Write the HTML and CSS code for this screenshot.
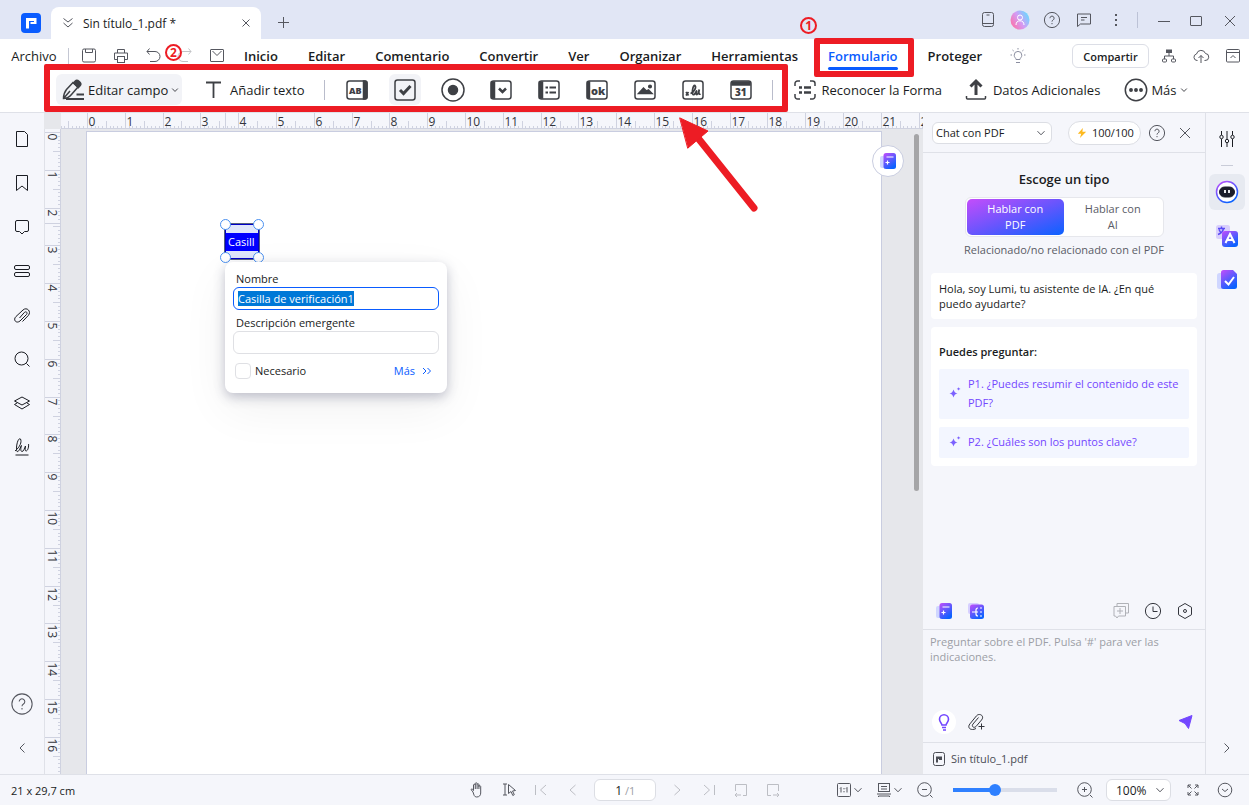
FILE: index.html
```html
<!DOCTYPE html>
<html lang="es">
<head>
    <meta charset="UTF-8">
    <meta name="viewport" content="width=device-width, initial-scale=1.0">
    <title>Sin título_1.pdf</title>
    <link rel="stylesheet" href="styles.css">
</head>
<body>
    <svg class="defs" width="0" height="0" aria-hidden="true">
        <defs>
            <linearGradient id="grad-ai" x1="0" y1="0" x2="0.6" y2="1">
                <stop offset="0" stop-color="#c44dfb"/>
                <stop offset="1" stop-color="#0b62ff"/>
            </linearGradient>
            <linearGradient id="grad-avatar" x1="0" y1="0.8" x2="1" y2="0.2">
                <stop offset="0" stop-color="#ff6fa5"/>
                <stop offset="0.5" stop-color="#d39cf5"/>
                <stop offset="1" stop-color="#5fe0ff"/>
            </linearGradient>
        </defs>
        <symbol id="i-help" viewBox="0 0 18 18"><circle cx="9" cy="9" r="7.6"/><path d="M6.9 7.2a2.1 2.1 0 1 1 3.2 1.8c-.8.5-1.1.8-1.1 1.6M9 12v1.2"/></symbol>
        <symbol id="i-close" viewBox="0 0 18 18"><path d="M4 4l10 10M14 4L4 14"/></symbol>
        <symbol id="i-chevron" viewBox="0 0 10 10"><path d="M1.5 3.2L5 6.8l3.5-3.6"/></symbol>
        <symbol id="i-spark" viewBox="0 0 14 14"><path d="M5.500 3.500c.8 2.500 1.500 3.200 4 4-2.500.8-3.200 1.500-4 4-.8-2.500-1.500-3.200-4-4 2.500-.8 3.200-1.500 4-4zM10.600 1c.3 1.200.6 1.500 1.900 1.900-1.300.3-1.600.6-1.900 1.900-.3-1.300-.6-1.600-1.900-1.900 1.300-.4 1.600-.7 1.900-1.900z"/></symbol>
        <symbol id="i-notes" viewBox="0 0 18 18"><g stroke="none"><rect x="1" y="4" width="8" height="12" rx="2" fill="#cfd6ff"/><rect x="4.500" y="1" width="12.500" height="16" rx="2.500" fill="url(#grad-ai)"/></g><path d="M7.500 5h7M8.500 8.500v4M6.500 10.500h4" stroke="#fff" stroke-width="1.200" fill="none"/></symbol>
    </svg>

    <header class="titlebar">
        <svg class="logo" viewBox="0 0 20 20"><rect width="20" height="20" rx="4" fill="#0a5cff"/><path d="M5 5h10.500v6H9.500V9h3.500V8H8v7.500H5z" fill="#fff"/></svg>
        <div class="doc-tab">
            <svg class="icon" viewBox="0 0 18 18"><path d="M4.500 4.500L9 8l4.500-3.500M4.500 9L9 13l4.500-4"/></svg>
            <span class="doc-name">Sin título_1.pdf *</span>
            <button class="tab-close" aria-label="Cerrar pestaña"><svg viewBox="0 0 10 10"><path d="M1.500 1.500l7 7M8.500 1.500l-7 7"/></svg></button>
        </div>
        <button class="icon-btn new-tab" aria-label="Nueva pestaña"><svg class="icon" viewBox="0 0 18 18"><path d="M9.500 3v11M4 8.500h11"/></svg></button>
        <div class="title-actions">
            <button class="icon-btn" aria-label="Dispositivo"><svg class="icon" viewBox="0 0 18 18"><rect x="3.500" y="1.500" width="11" height="14" rx="2"/><path d="M3.500 12.500h11M7.500 4h3"/></svg></button>
            <button class="icon-btn" aria-label="Cuenta"><svg class="avatar" viewBox="0 0 20 20"><circle cx="10" cy="10" r="9.500" fill="url(#grad-avatar)"/><circle cx="10" cy="7.500" r="2.500"/><path d="M6 15c0-2.700 1.500-4.200 4-4.200s4 1.500 4 4.200"/></svg></button>
            <button class="icon-btn" aria-label="Ayuda"><svg class="icon"><use href="#i-help"/></svg></button>
            <button class="icon-btn" aria-label="Comentarios"><svg class="icon" viewBox="0 0 18 18"><path d="M2.500 3h13v10h-10l-3 2.500zM6 6.500h6M6 9h3.500"/></svg></button>
            <button class="icon-btn" aria-label="Más opciones"><svg class="icon" viewBox="0 0 18 18"><path d="M9 3v2M9 8v2M9 13v2" stroke-width="2"/></svg></button>
            <span class="title-sep"></span>
            <button class="icon-btn" aria-label="Minimizar"><svg class="icon" viewBox="0 0 18 18"><path d="M3 10.500h12"/></svg></button>
            <button class="icon-btn" aria-label="Maximizar"><svg class="icon" viewBox="0 0 18 18"><rect x="3.500" y="5.500" width="11" height="9" rx=".5"/></svg></button>
            <button class="icon-btn win-close" aria-label="Cerrar"><svg class="icon" viewBox="0 0 18 18"><path d="M4 5l10 10M14 5L4 15"/></svg></button>
        </div>
    </header>

    <div class="menubar">
        <button class="menu-file">Archivo</button>
        <span class="menu-sep"></span>
        <button class="icon-btn" aria-label="Guardar"><svg class="icon" viewBox="0 0 18 18"><rect x="2.500" y="2" width="13" height="13" rx="1.500"/><path d="M5.500 2v3.500h7V2"/></svg></button>
        <button class="icon-btn" aria-label="Imprimir"><svg class="icon" viewBox="0 0 18 18"><path d="M5.500 6V2.500h7V6M5 12.500H2.500V6h13v6.500H13"/><rect x="5.500" y="9.500" width="7" height="6"/></svg></button>
        <span class="undo">
            <button class="icon-btn" aria-label="Deshacer"><svg class="icon" viewBox="0 0 18 18"><path d="M5.500 1.500L3 4.500l2.500 3M3 4.500h8a5 5 0 0 1 0 10H6"/></svg></button>
            <span class="step step-two">2</span>
        </span>
        <button class="icon-btn faded" aria-label="Rehacer"><svg class="icon" viewBox="0 0 18 18"><path d="M12.500 1.500L15 4.500l-2.500 3M15 4.500H7a5 5 0 0 0 0 10h5"/></svg></button>
        <button class="icon-btn" aria-label="Enviar por correo"><svg class="icon" viewBox="0 0 18 18"><rect x="2.500" y="2.500" width="13" height="12" rx=".5"/><path d="M4.500 4l4.500 4.500L13.500 4"/></svg></button>
        <nav class="menu-tabs">
            <a href="#">Inicio</a>
            <a href="#">Editar</a>
            <a href="#">Comentario</a>
            <a href="#">Convertir</a>
            <a href="#">Ver</a>
            <a href="#">Organizar</a>
            <a href="#">Herramientas</a>
            <a href="#" class="current">Formulario<span class="step step-one">1</span></a>
            <a href="#">Proteger</a>
        </nav>
        <div class="menu-actions">
            <button class="icon-btn soft" aria-label="Sugerencias"><svg class="icon" viewBox="0 0 18 18"><path d="M7 12.500c0-1.500-1.800-2-1.800-4.300a3.800 3.800 0 0 1 7.600 0c0 2.300-1.800 2.800-1.800 4.300zM7 15.500h4M9 1v1.500M1.500 8H3M15 8h1.500M3.500 3l1.200 1M14.500 3l-1.200 1"/></svg></button>
            <button class="share">Compartir</button>
            <button class="icon-btn" aria-label="Organigrama"><svg class="icon" viewBox="0 0 18 18"><rect x="6.500" y="3" width="5" height="2.500" fill="currentColor"/><path d="M9 5.500V9M4.500 12V9h9v3"/><rect x="2.500" y="12" width="4" height="3" rx="1"/><rect x="11.500" y="12" width="4" height="3" rx="1"/></svg></button>
            <button class="icon-btn" aria-label="Subir a la nube"><svg class="icon" viewBox="0 0 18 18"><path d="M5.500 13.500H5a3.300 3.300 0 0 1-.5-6.500 4.700 4.700 0 0 1 9-.5A3.500 3.500 0 0 1 13 13.500h-.5M9 16V8.500M6.500 11L9 8.500l2.500 2.500"/></svg></button>
            <button class="icon-btn" aria-label="Contraer cinta"><svg class="icon" viewBox="0 0 18 18"><rect x="2.500" y="2.500" width="13" height="12.500" rx="1"/><path d="M2.500 5.500h13M6.500 11L9 8.500l2.500 2.500"/></svg></button>
        </div>
    </div>

    <div class="toolbar">
        <div class="form-tools">
            <button class="tool edit-field">
                <svg class="tool-icon" viewBox="0 0 24 24"><path d="M2.500 20.500c0-4 1-6.500 3-9L12 4.500l5 4.500-6.500 7.500c-2 2.500-4.500 3.800-8 4zM2.500 20.500L9 13"/><path d="M12.500 5l1.800-2c2-2 7 2 5 4.500l-2 2.200z" fill="currentColor"/><path d="M5 21h18M15.500 16.500H23" stroke-width="2"/></svg>
                <span>Editar campo</span>
                <svg class="chevron"><use href="#i-chevron"/></svg>
            </button>
            <button class="tool add-text">
                <svg class="tool-icon" viewBox="0 0 24 24"><path d="M5 4.500h15M12.500 4.500v15.500" stroke-width="1.800"/></svg>
                <span>Añadir texto</span>
            </button>
            <span class="tool-sep"></span>
            <div class="field-tools">
                <button aria-label="Campo de texto"><svg class="tool-icon" viewBox="0 0 24 24"><rect x="2" y="3" width="20" height="18" rx="2.500"/><path d="M18.500 3H20a2 2 0 0 1 2 2v14a2 2 0 0 1-2 2h-1.500z" fill="currentColor"/><text x="4" y="15.500">AB</text></svg></button>
                <button class="active" aria-label="Casilla de verificación"><svg class="tool-icon" viewBox="0 0 24 24"><rect x="2" y="2" width="20" height="20" rx="2.500"/><path d="M7 12l3.500 3.500L17.500 8" stroke-width="3"/></svg></button>
                <button aria-label="Botón de opción"><svg class="tool-icon" viewBox="0 0 24 24"><circle cx="12" cy="12" r="11"/><circle cx="12" cy="12" r="4.500" fill="currentColor"/></svg></button>
                <button aria-label="Lista desplegable"><svg class="tool-icon" viewBox="0 0 24 24"><rect x="2" y="3" width="20" height="18" rx="2.500"/><path d="M2.500 4h3v16h-3z" fill="currentColor"/><path d="M10 10.500l3.500 3.500 3.500-3.500" stroke-width="2.500"/></svg></button>
                <button aria-label="Cuadro de lista"><svg class="tool-icon" viewBox="0 0 24 24"><rect x="2" y="3" width="20" height="18" rx="2.500"/><path d="M2.500 4h3v16h-3z" fill="currentColor"/><path d="M8.500 9.500h2.500M12.500 9.500H19M8.500 14.500h2.500M12.500 14.500H19" stroke-width="2"/></svg></button>
                <button aria-label="Botón"><svg class="tool-icon" viewBox="0 0 24 24"><rect x="2" y="3" width="20" height="18" rx="2.500"/><path d="M2.500 4h2v16h-2z" fill="currentColor"/><text class="ok" x="6" y="16.500">ok</text></svg></button>
                <button aria-label="Campo de imagen"><svg class="tool-icon" viewBox="0 0 24 24"><rect x="2" y="3" width="20" height="18" rx="2.500"/><path d="M5.500 15.500l5-5.500 3 3 2-1 3.500 3.500z" fill="currentColor"/><circle cx="17" cy="8.500" r="1.300" fill="currentColor"/></svg></button>
                <button aria-label="Firma digital"><svg class="tool-icon" viewBox="0 0 24 24"><rect x="2" y="3" width="20" height="18" rx="2.500"/><path d="M5 14l2.500 3.500M7.500 14L5 17.500M9.500 15.500c4-1 6-6.500 4.500-8-2-1-3.500 7.500-2 9 1.500 1 2.800-3 3.800-4-1 2.500-1 4.500.3 4 1-.5 1.500-3 2.200-5-.8 3-.6 5.500 1.200 4.500" stroke-width="1.700"/></svg></button>
                <button aria-label="Campo de fecha"><svg class="tool-icon" viewBox="0 0 24 24"><rect x="2" y="3" width="20" height="18" rx="2.500"/><path d="M3 4h18v3H3z" fill="currentColor"/><text x="6" y="18" class="num">31</text></svg></button>
            </div>
            <span class="tool-sep last"></span>
            <svg class="arrow" viewBox="0 0 80 96"><path d="M15 16l60 75" stroke-width="7"/><path d="M1 1l28 13L9 31z" class="arrow-head"/></svg>
        </div>
        <button class="tool">
            <svg class="tool-icon" viewBox="0 0 24 24"><path d="M7 3H4.500A2.500 2.500 0 0 0 2 5.500V8M17 3h2.500A2.500 2.500 0 0 1 22 5.500V8M7 21H4.500A2.500 2.500 0 0 1 2 18.500V16M17 21h2.500a2.500 2.500 0 0 0 2.500-2.500V16"/><path d="M6 9.500h3M11 9.500h7M6 14.500h3M11 14.500h7" stroke-width="2.500"/></svg>
            <span>Reconocer la Forma</span>
        </button>
        <button class="tool extra-data">
            <svg class="tool-icon" viewBox="0 0 24 24"><path d="M2.500 18v2a1 1 0 0 0 1 1h17a1 1 0 0 0 1-1v-2"/><path d="M12 17V4M6.500 8.500L12 3l5.500 5.500" stroke-width="3"/></svg>
            <span>Datos Adicionales</span>
        </button>
        <button class="tool more">
            <svg class="tool-icon" viewBox="0 0 24 24"><circle cx="12" cy="12" r="10.700"/><g fill="currentColor"><circle cx="7" cy="12" r="1.200"/><circle cx="12" cy="12" r="1.200"/><circle cx="17" cy="12" r="1.200"/></g></svg>
            <span>Más</span>
            <svg class="chevron"><use href="#i-chevron"/></svg>
        </button>
    </div>

    <main class="workspace">
        <aside class="rail left-rail">
            <button aria-label="Miniaturas"><svg class="icon" viewBox="0 0 18 18"><path d="M3.500 1.500h8l3 3v12h-11z"/></svg></button>
            <button aria-label="Marcadores"><svg class="icon" viewBox="0 0 18 18"><path d="M3.500 1.500h11v15L9 12l-5.500 4.500z"/></svg></button>
            <button aria-label="Comentarios"><svg class="icon" viewBox="0 0 18 18"><path d="M4 2.500h10a1.500 1.500 0 0 1 1.500 1.500v8a1.500 1.500 0 0 1-1.500 1.500h-2.500L9 16l-2.500-2.500H4A1.500 1.500 0 0 1 2.500 12V4A1.500 1.500 0 0 1 4 2.500z"/></svg></button>
            <button aria-label="Campos"><svg class="icon" viewBox="0 0 18 18"><rect x="1.500" y="3.500" width="15" height="4" rx="1.500"/><rect x="1.500" y="10.500" width="15" height="4" rx="1.500"/></svg></button>
            <button aria-label="Adjuntos"><svg class="icon" viewBox="0 0 18 18"><path d="M9.500 15.500L15.300 9.500c3.500-4-1.500-9-5.300-5.500L3 10.500c-3.500 3.500.5 7.500 4 4.500l6.500-6.500c1.500-2-.5-3.500-2-2.200L6.500 12"/></svg></button>
            <button aria-label="Buscar"><svg class="icon" viewBox="0 0 18 18"><circle cx="8.500" cy="8.500" r="6.500"/><path d="M13.500 13.500l3 3"/></svg></button>
            <button aria-label="Capas"><svg class="icon" viewBox="0 0 18 18"><path d="M9 3l7.500 4L9 11 1.500 7zM4 9l-2.500 1.500 7.500 4.500 7.500-4.500L14 9"/></svg></button>
            <button aria-label="Firmas"><svg class="icon" viewBox="0 0 18 18"><path d="M2 13C7 9 9 4 7.500 1 4.500-1 2.500 11 4 13.500c2 1 3.500-5 4.500-6-1 3-1 6 .5 6 2 0 2.500-4 3.500-5.500-.5 3-.5 5 .5 5 2 0 3-5 2.500-7M2.500 17h13"/></svg></button>
            <button class="push" aria-label="Ayuda"><svg class="big-help"><use href="#i-help"/></svg></button>
            <button class="collapse" aria-label="Contraer"><svg class="icon" viewBox="0 0 18 18"><path d="M11.500 4.500L7 9l4.500 4.500"/></svg></button>
        </aside>

        <section class="document">
            <div class="ruler-corner"></div>
            <svg class="ruler ruler-x" id="ruler-x"></svg>
            <svg class="ruler ruler-y" id="ruler-y"></svg>
            <div class="canvas">
                <div class="page">
                    <div class="field">
                        <span class="field-name">Casill</span>
                        <i class="handle nw"></i><i class="handle ne"></i><i class="handle sw"></i><i class="handle se"></i>
                    </div>
                    <form class="field-popup">
                        <label for="field-name">Nombre</label>
                        <input type="text" id="field-name" value="Casilla de verificación1">
                        <label for="field-hint">Descripción emergente</label>
                        <input type="text" id="field-hint">
                        <div class="popup-foot">
                            <input type="checkbox" id="required">
                            <label for="required">Necesario</label>
                            <a href="#">Más <svg viewBox="0 0 10 10"><path d="M1 2l3 3-3 3M5.500 2l3 3-3 3"/></svg></a>
                        </div>
                    </form>
                    <button class="float-btn" aria-label="Asistente"><svg class="icon"><use href="#i-notes"/></svg></button>
                </div>
                <span class="scroll-thumb"></span>
            </div>
        </section>

        <section class="chat">
            <div class="chat-head">
                <div class="select-box mode-select">
                    <select aria-label="Modo de chat"><option>Chat con PDF</option></select>
                    <svg class="chevron"><use href="#i-chevron"/></svg>
                </div>
                <span class="credits"><svg viewBox="0 0 12 12"><path d="M7 0L1 7h4l-1.500 5L11 4.500H6.500z"/></svg>100/100</span>
                <button class="icon-btn" aria-label="Ayuda"><svg class="icon"><use href="#i-help"/></svg></button>
                <button class="icon-btn head-close" aria-label="Cerrar chat"><svg class="icon"><use href="#i-close"/></svg></button>
            </div>
            <div class="chat-body">
                <h2>Escoge un tipo</h2>
                <div class="switch">
                    <button class="on">Hablar con PDF</button>
                    <button>Hablar con AI</button>
                </div>
                <p class="related">Relacionado/no relacionado con el PDF</p>
                <div class="card">Hola, soy Lumi, tu asistente de IA. ¿En qué puedo ayudarte?</div>
                <div class="card ask">
                    <h3>Puedes preguntar:</h3>
                    <button class="question"><svg><use href="#i-spark"/></svg><span>P1. ¿Puedes resumir el contenido de este PDF?</span></button>
                    <button class="question"><svg><use href="#i-spark"/></svg><span>P2. ¿Cuáles son los puntos clave?</span></button>
                </div>
            </div>
            <div class="chat-tools">
                <button class="icon-btn" aria-label="Resumir"><svg class="icon"><use href="#i-notes"/></svg></button>
                <button class="icon-btn" aria-label="Mapa mental"><svg class="icon" viewBox="0 0 18 18"><rect x="1" y="1" width="11" height="11" rx="2" fill="#d6cfff" stroke="none"/><rect x="3" y="2.500" width="14" height="14.500" rx="2.500" fill="url(#grad-ai)" stroke="none"/><path d="M5 10h4M11 6c-2 0-2 1-2 2v4c0 1 0 2 2 2M9 10h2M13 6h2M13 10h2M13 14h2" stroke="#fff" stroke-width="1.200"/></svg></button>
                <button class="icon-btn faded new-chat" aria-label="Nuevo chat"><svg class="icon" viewBox="0 0 18 18"><path d="M5 4V1.500h11.500V11H14M2 4.500h11.500v9.500H6.500l-1.500 2-1.500-2H2zM5 9h6M8 6v6"/></svg></button>
                <button class="icon-btn" aria-label="Historial"><svg class="icon" viewBox="0 0 18 18"><circle cx="9" cy="9" r="7.600"/><path d="M9 4.500V9.500h4.500"/></svg></button>
                <button class="icon-btn" aria-label="Ajustes"><svg class="icon" viewBox="0 0 18 18"><path d="M9 1.500l6.500 3.800v7.400L9 16.500l-6.500-3.800V5.300z"/><circle cx="9" cy="9" r="1.500"/></svg></button>
            </div>
            <div class="composer">
                <textarea aria-label="Mensaje" placeholder="Preguntar sobre el PDF. Pulsa '#' para ver las indicaciones."></textarea>
                <div class="composer-bar">
                    <button class="idea" aria-label="Ideas"><svg class="icon" viewBox="0 0 18 18"><path d="M7 12c0-1.800-2.500-2.700-2.500-5.800a4.500 4.500 0 0 1 9 0c0 3.100-2.500 4-2.500 5.800zM7 14.500h4M8 17h3" stroke-width="1.600"/></svg></button>
                    <button class="icon-btn" aria-label="Adjuntar"><svg class="icon" viewBox="0 0 18 18"><path d="M9 15.500l-2 .8c-4 1-7-2-4-5.500l6.500-8C12.500-.5 18 3 14.500 7L9 13.500c-2 2-5 0-3-2.500l5.500-6.500M14.500 10.500v6M11.500 13.500h6"/></svg></button>
                    <button class="icon-btn send" aria-label="Enviar"><svg class="icon" viewBox="0 0 18 18"><path d="M16 2.500L12.500 15.500 9 10.500 3 7.500z"/></svg></button>
                </div>
            </div>
            <div class="chat-file"><svg class="icon" viewBox="0 0 18 18"><rect x="3.500" y="2.500" width="11" height="13" rx="2"/><path d="M6 6.500h6v3.500H9V9h1.500-2.500v3.500H6z" fill="currentColor" stroke="none"/></svg>Sin título_1.pdf</div>
        </section>

        <aside class="rail right-rail">
            <button aria-label="Propiedades"><svg class="icon" viewBox="0 0 18 18"><path d="M3.500 1v4M3.500 9v8M9 1v8M9 13v4M14.500 1v4M14.500 9v8"/><circle cx="3.500" cy="7" r="1.700"/><circle cx="9" cy="11" r="1.700"/><circle cx="14.500" cy="7" r="1.700"/></svg></button>
            <span class="rail-dash"></span>
            <button class="active" aria-label="Lumi"><svg class="rail-ai" viewBox="0 0 24 24"><circle cx="12" cy="12" r="10.500" fill="#fff" stroke="url(#grad-ai)" stroke-width="1.500"/><rect x="4.500" y="7" width="15" height="10" rx="5" fill="#1b1d2a" stroke="#1b1d2a"/><path d="M10 10v3M14 10v3" stroke="#fff" stroke-width="1.800"/></svg></button>
            <button aria-label="Traducir"><svg class="rail-ai" viewBox="0 0 24 24"><rect x="1" y="1" width="14" height="14" rx="2.500" fill="#d9cffc"/><path d="M3 4.500h7M6.500 2.500v2M8.500 4.500C8 7 6 9.500 3 10.500M4 5.500c.8 1.800 1.500 2.800 2.500 3.500" stroke="#5a4bf5" stroke-width="1.500" fill="none"/><rect x="7" y="7" width="16" height="16" rx="3" fill="url(#grad-ai)"/><path d="M10.500 19l4.500-9 4.500 9M12.500 16h5" stroke="#fff" stroke-width="2" fill="none"/></svg></button>
            <button aria-label="Corregir"><svg class="rail-ai" viewBox="0 0 24 24"><rect x="2" y="5" width="12" height="16" rx="2.500" fill="#cfd6ff"/><path d="M9 2h9l4 4v12.500a2.500 2.500 0 0 1-2.500 2.500h-11A2.500 2.500 0 0 1 6 18.500v-14A2.500 2.500 0 0 1 8.500 2z" fill="url(#grad-ai)"/><path d="M10 13l3.500 3.500L19 9" stroke="#fff" stroke-width="2" fill="none"/></svg></button>
            <button class="push collapse" aria-label="Expandir"><svg class="icon" viewBox="0 0 18 18"><path d="M6.500 4.500L11 9l-4.500 4.500"/></svg></button>
        </aside>
    </main>

    <footer class="statusbar">
        <span>21 x 29,7 cm</span>
        <div class="page-nav">
            <button class="icon-btn" aria-label="Mano"><svg class="icon" viewBox="0 0 18 18"><path d="M5 11L3 8.500c1-1 2 0 2.500 1V4c0-1 1.800-1 1.800 0V2.500c0-1 1.800-1 1.800 0V3.500c0-1 1.800-1 1.800 0v2c0-1 1.800-1 1.800 0V12c0 2.500-1.500 4-4 4S6 14 5 11zM7.300 4v4M9.100 3.500V8M10.900 4v4"/></svg></button>
            <button class="icon-btn" aria-label="Seleccionar"><svg class="icon" viewBox="0 0 18 18"><path d="M3 3h4M5 3v11M3 14h4M8.500 3.500v9l2.500-2 1.800 4 1.500-.8L12.500 10l3-.5z"/></svg></button>
            <button class="icon-btn faded" aria-label="Primera"><svg class="icon" viewBox="0 0 18 18"><path d="M3.500 4v10M14 4L8.500 9l5.500 5"/></svg></button>
            <button class="icon-btn faded" aria-label="Anterior"><svg class="icon" viewBox="0 0 18 18"><path d="M11.500 4L6 9l5.500 5"/></svg></button>
            <label class="page-box"><input type="text" value="1" aria-label="Página"><span>/1</span></label>
            <button class="icon-btn faded" aria-label="Siguiente"><svg class="icon" viewBox="0 0 18 18"><path d="M6.500 4L12 9l-5.500 5"/></svg></button>
            <button class="icon-btn faded" aria-label="Última"><svg class="icon" viewBox="0 0 18 18"><path d="M4 4l5.500 5L4 14M14.500 4v10"/></svg></button>
            <button class="icon-btn faded" aria-label="Vista anterior"><svg class="icon" viewBox="0 0 18 18"><path d="M3.500 10V3.500h11v11H11M9 14H3M5 12l-2 2 2 2"/></svg></button>
            <button class="icon-btn faded" aria-label="Vista siguiente"><svg class="icon" viewBox="0 0 18 18"><path d="M7 14.500H3.500v-11h11V10M9 14h6M13 12l2 2-2 2"/></svg></button>
        </div>
        <div class="view-tools">
            <button class="view-btn" aria-label="Ajuste"><svg class="icon" viewBox="0 0 18 18"><rect x="2.500" y="2.500" width="13" height="13" rx="1"/><path d="M5 7.500l1-1v5M11 7.500l1-1v5M9 7v1.300M9 10v1.300"/></svg><svg class="chevron"><use href="#i-chevron"/></svg></button>
            <button class="view-btn" aria-label="Vista de página"><svg class="icon" viewBox="0 0 18 18"><rect x="3.500" y="2.500" width="11" height="8"/><path d="M6 5.500h6M6 8h6M2 13h14M3.500 16v-1h11v1"/></svg><svg class="chevron"><use href="#i-chevron"/></svg></button>
            <button class="icon-btn" aria-label="Alejar"><svg class="icon" viewBox="0 0 18 18"><circle cx="8.500" cy="8.500" r="6.800"/><path d="M14 14l2.500 2.500M6 8.500h5"/></svg></button>
            <input type="range" class="zoom-range" min="0" max="100" value="39" aria-label="Zoom">
            <button class="icon-btn" aria-label="Acercar"><svg class="icon" viewBox="0 0 18 18"><circle cx="8.500" cy="8.500" r="6.800"/><path d="M14 14l2.500 2.500M6 8.500h5M8.500 6v5"/></svg></button>
            <div class="select-box zoom-select">
                <select aria-label="Nivel de zoom"><option>100%</option></select>
                <svg class="chevron"><use href="#i-chevron"/></svg>
            </div>
            <button class="icon-btn" aria-label="Pantalla completa"><svg class="icon" viewBox="0 0 18 18"><path d="M4 7V4h3M11 4h3v3M14 11v3h-3M7 14H4v-3M4 4l3.500 3.500M14 4l-3.500 3.500M14 14l-3.500-3.500M4 14l3.500-3.500"/></svg></button>
            <button class="icon-btn" aria-label="Ocultar barra"><svg class="icon" viewBox="0 0 18 18"><circle cx="9" cy="9" r="6.800"/><path d="M6 8l3 2.500L12 8"/></svg></button>
        </div>
    </footer>

    <script src="script.js"></script>
</body>
</html>
```

FILE: styles.css
```css
* {
    box-sizing: border-box;
}

body {
    margin: 0;
    height: 100vh;
    display: flex;
    flex-direction: column;
    overflow: hidden;
    font-family: "Open Sans", "Noto Sans", sans-serif;
    font-size: 13px;
    color: #1a1c22;
    background-color: #fff;
}

button,
input,
select,
textarea {
    font: inherit;
    color: inherit;
}

button {
    border: none;
    padding: 0;
    background: none;
    cursor: pointer;
}

a {
    color: inherit;
    text-decoration: none;
}

.defs {
    position: absolute;
}

.icon {
    display: block;
    width: 18px;
    height: 18px;
    fill: none;
    stroke: currentColor;
    stroke-width: 1;
}

.icon-btn {
    width: 32px;
    height: 28px;
    flex: none;
    display: flex;
    align-items: center;
    justify-content: center;
    color: #55575f;
}

.faded {
    opacity: 0.35;
}

.chevron {
    width: 10px;
    height: 10px;
    flex: none;
    fill: none;
    stroke: #55575f;
    stroke-width: 1;
}

/* Title bar */
.titlebar {
    height: 39px;
    flex: none;
    display: flex;
    align-items: center;
    padding: 7px 3px 0 21px;
    background-color: #e1e6f5;
}

.logo {
    width: 20px;
    height: 20px;
    margin-right: 10px;
}

.doc-tab {
    width: 210px;
    height: 32px;
    display: flex;
    align-items: center;
    padding: 0 10px 0 8px;
    background-color: #fff;
    border-radius: 8px 8px 0 0;
    font-size: 12px;
}

.doc-tab .icon {
    color: #55575f;
}

.doc-name {
    flex: 1;
    margin-left: 6px;
}

.tab-close {
    width: 10px;
    height: 10px;
    display: flex;
}

.tab-close svg {
    width: 10px;
    stroke: #55575f;
}

.new-tab {
    margin-left: 6px;
}

.title-actions {
    display: flex;
    align-items: center;
    margin: 0 0 7px auto;
}

.avatar {
    width: 20px;
    height: 20px;
    fill: none;
    stroke: #fff;
}

.avatar circle:first-child {
    stroke: none;
}

.title-sep {
    width: 1px;
    height: 16px;
    margin: 0 10px 0 5px;
    background-color: #bcc2d6;
}

.win-close {
    margin-left: 2px;
}

/* Menu bar */
.menubar {
    height: 34px;
    flex: none;
    display: flex;
    align-items: center;
    padding-left: 11px;
}

.menu-file {
    width: 46px;
}

.menu-sep {
    width: 1px;
    height: 16px;
    margin: 0 4px 0 11px;
    background-color: #c4c7d3;
}

.menu-tabs {
    display: flex;
    gap: 30px;
    margin-left: 11px;
    font-weight: 600;
}

.menu-tabs a {
    position: relative;
}

.menu-tabs .current {
    color: #0a5cff;
}

.current::before {
    content: "";
    position: absolute;
    left: 0;
    right: 0;
    bottom: -5px;
    height: 3px;
    border-radius: 2px;
    background-color: #0a5cff;
}

.current::after {
    content: "";
    position: absolute;
    inset: -9px -16px -12px -14px;
    border: 6px solid #ed1c24;
    border-radius: 2px;
}

.undo {
    position: relative;
}

.step {
    position: absolute;
    width: 17px;
    height: 17px;
    border: 2px solid #ed1c24;
    border-radius: 50%;
    color: #ed1c24;
    font-size: 12px;
    font-weight: 700;
    line-height: 13px;
    text-align: center;
}

.step-one {
    left: -28px;
    top: -30px;
}

.step-two {
    left: 28px;
    top: 2px;
    z-index: 1;
}

.menu-actions {
    display: flex;
    align-items: center;
    margin-left: auto;
}

.soft {
    color: #8b8ea0;
}

.share {
    width: 77px;
    height: 24px;
    margin: 0 4px 0 38px;
    border: 1px solid #dcdee6;
    border-radius: 6px;
    font-size: 11px;
    font-weight: 600;
}

/* Form toolbar */
.toolbar {
    height: 40px;
    flex: none;
    display: flex;
    align-items: flex-start;
    padding: 1px 0 0 56px;
    border-bottom: 1px solid #dfe1e8;
}

.tool {
    height: 31px;
    display: flex;
    align-items: center;
    gap: 5px;
    white-space: nowrap;
}

.tool-icon {
    width: 24px;
    height: 24px;
    flex: none;
    fill: none;
    stroke: currentColor;
    stroke-width: 1.5;
    color: #3e4045;
}

.tool-icon text {
    fill: currentColor;
    stroke: none;
    font-size: 9px;
    font-weight: 800;
}

.tool-icon .num {
    font-size: 10px;
}

.tool-icon .ok {
    font-size: 11px;
}

.form-tools {
    position: relative;
    display: flex;
    align-items: center;
    margin-right: 20px;
}

.form-tools::after {
    content: "";
    position: absolute;
    z-index: 2;
    inset: -10px -15px -7px -12px;
    border: 6px solid #ed1c24;
    border-radius: 2px;
    pointer-events: none;
}

.edit-field {
    width: 126px;
    padding-left: 5px;
    gap: 3px;
    border-radius: 6px;
    background-color: #f2f3f7;
}

.edit-field .chevron,
.more .chevron {
    width: 8px;
    height: 8px;
    stroke: #1a1c22;
}

.add-text {
    margin-left: 19px;
}

.tool-sep {
    width: 1px;
    height: 20px;
    margin: 0 16px 0 19px;
    background-color: #b9bccb;
}

.tool-sep.last {
    margin: 0 0 0 15px;
}

.field-tools {
    display: flex;
    gap: 16px;
}

.field-tools button {
    width: 32px;
    height: 31px;
    display: flex;
    align-items: center;
    justify-content: center;
    border-radius: 6px;
}

.field-tools .active {
    background-color: #f2f3f7;
}

.arrow {
    position: absolute;
    left: 623px;
    top: 43px;
    z-index: 3;
    width: 80px;
    height: 96px;
    stroke: #ed1c24;
    stroke-linecap: round;
    pointer-events: none;
}

.arrow-head {
    fill: #ed1c24;
}

.extra-data {
    margin-left: 22px;
}

.more {
    margin-left: 24px;
    gap: 3px;
}

/* Workspace */
.workspace {
    flex: 1;
    min-height: 0;
    display: flex;
}

.rail {
    width: 44px;
    flex: none;
    display: flex;
    flex-direction: column;
    align-items: center;
    gap: 8px;
    padding: 8px 0;
    background-color: #f5f6fb;
}

.rail button {
    width: 36px;
    height: 36px;
    display: flex;
    align-items: center;
    justify-content: center;
    border-radius: 6px;
}

.rail .push {
    margin-top: auto;
}

.rail .active {
    background-color: #e7eaf1;
}

.right-rail {
    padding-right: 1px;
    border-left: 1px solid #dfe1e8;
}

.rail-dash {
    width: 12px;
    height: 1px;
    background-color: #c9ccd8;
}

.rail-ai {
    width: 24px;
    height: 24px;
}

.big-help {
    width: 24px;
    height: 24px;
    fill: none;
    stroke: #55575f;
    stroke-width: 0.8;
}

.collapse {
    color: #55575f;
}

.document {
    flex: 1;
    min-width: 0;
    display: grid;
    grid-template-columns: 17px 1fr;
    grid-template-rows: 16px 1fr;
    overflow: hidden;
    background-color: #e6e7eb;
}

.ruler {
    display: block;
    background-color: #f5f6fb;
    overflow: hidden;
}

.ruler path {
    stroke: #cfd2e0;
}

.ruler text {
    font-size: 12px;
    fill: #33353c;
}

.ruler-x {
    width: 100%;
    height: 16px;
    border-bottom: 1px solid #cfd2e0;
}

.ruler-y {
    width: 17px;
    height: 100%;
    border-left: 1px solid #dfe1e8;
    border-right: 1px solid #cfd2e0;
}

.canvas {
    position: relative;
    min-width: 0;
    padding: 2px 0 0 25px;
    display: flex;
}

.page {
    position: relative;
    width: 796px;
    flex: none;
    border: 1px solid #c9cde0;
    border-bottom: none;
    background-color: #fff;
}

.scroll-thumb {
    position: absolute;
    right: 4px;
    top: 5px;
    width: 5px;
    height: 357px;
    border-radius: 3px;
    background-color: #a5a5a7;
}

.float-btn {
    position: absolute;
    right: -23px;
    top: 13px;
    width: 32px;
    height: 32px;
    display: flex;
    align-items: center;
    justify-content: center;
    border: 1px solid #c9cde0;
    border-radius: 50%;
    background-color: #fff;
}

/* Selected form field */
.field {
    position: absolute;
    left: 138px;
    top: 92px;
    width: 34px;
    height: 35px;
    display: flex;
    align-items: center;
    border: 1px solid #0000c8;
    outline: 1px solid #55617f;
    background-color: #dfe6fb;
}

.field-name {
    flex: 1;
    padding: 0 0 0 2px;
    line-height: 18px;
    font-size: 11px;
    color: #fff;
    background-color: #0000ff;
}

.handle {
    position: absolute;
    width: 11px;
    height: 11px;
    border: 1px solid #4a90f0;
    border-radius: 50%;
    background-color: #fff;
}

.nw { left: -6px; top: -6px; }
.ne { right: -6px; top: -6px; }
.sw { left: -6px; bottom: -5px; }
.se { right: -6px; bottom: -5px; }

.field-popup {
    position: absolute;
    left: 138px;
    top: 130px;
    width: 222px;
    display: flex;
    flex-direction: column;
    padding: 9px 8px 8px;
    border-radius: 8px;
    background-color: #fff;
    box-shadow: 0 4px 12px rgba(60, 62, 100, 0.3), 0 16px 48px rgba(0, 0, 0, 0.06);
    font-size: 12px;
}

.field-popup > label {
    padding-left: 3px;
    line-height: 16px;
    font-size: 11px;
    font-weight: 500;
}

.field-popup input[type="text"] {
    height: 23px;
    margin-bottom: 5px;
    padding: 0 4px;
    border: 1px solid #dfe0e4;
    border-radius: 6px;
    outline: none;
    font-size: 11px;
}

.field-popup input[type="text"]:focus {
    border-color: #0a5cff;
}

.field-popup ::selection {
    color: #fff;
    background-color: #0078d7;
}

.popup-foot {
    display: flex;
    align-items: center;
    padding: 4px 7px 6px 2px;
    line-height: 16px;
    font-size: 11px;
}

.popup-foot input {
    appearance: none;
    width: 16px;
    height: 16px;
    margin: 0 4px 0 0;
    border: 1px solid #dfe0e4;
    border-radius: 4px;
}

.popup-foot a {
    display: flex;
    align-items: center;
    gap: 7px;
    margin-left: auto;
    color: #0a5cff;
    font-weight: 500;
}

.popup-foot svg {
    width: 10px;
    height: 10px;
    fill: none;
    stroke: #0a5cff;
}

/* Chat panel */
.chat {
    width: 282px;
    flex: none;
    display: flex;
    flex-direction: column;
    background-color: #f5f6fb;
    font-size: 11px;
}

.chat-head {
    height: 40px;
    display: flex;
    align-items: center;
    padding: 0 4px 0 9px;
    border-bottom: 1px solid #dfe1e8;
}

.select-box {
    position: relative;
}

.select-box select {
    appearance: none;
    width: 100%;
    height: 22px;
    border: 1px solid #dcdee4;
    border-radius: 6px;
    background-color: #fff;
    font-size: 12px;
}

.select-box .chevron {
    position: absolute;
    right: 6px;
    top: 6px;
    pointer-events: none;
}

.mode-select {
    width: 120px;
}

.mode-select select {
    padding: 0 3px;
    font-size: 11px;
}

.credits {
    height: 24px;
    display: flex;
    align-items: center;
    gap: 5px;
    margin-left: 16px;
    padding: 0 6px 0 8px;
    border: 1px solid #dcdee4;
    border-radius: 12px;
    background-color: #fff;
    font-size: 11px;
}

.credits svg {
    width: 10px;
    height: 10px;
    fill: #fdb91f;
}

.head-close {
    width: 24px;
}

.chat-body {
    flex: 1;
    padding: 16px 8px 0;
}

.chat-body h2 {
    margin: 0;
    line-height: 20px;
    font-size: 13px;
    font-weight: 600;
    text-align: center;
}

.switch {
    width: 199px;
    height: 40px;
    display: flex;
    margin: 8px auto 4px;
    padding: 1px;
    border: 1px solid #e6e7ec;
    border-radius: 6px;
    background-color: #fff;
    color: #5a5c66;
}

.switch button {
    flex: 1;
    padding: 0 17px;
    line-height: 16px;
    border-radius: 5px;
}

.switch .on {
    color: #fff;
    background-image: linear-gradient(160deg, #c44dfb, #6a55fd 50%, #0b62ff);
}

.related {
    margin: 0 0 15px;
    line-height: 17px;
    color: #5a5c66;
    text-align: center;
}

.card {
    margin-bottom: 8px;
    padding: 8px;
    line-height: 15px;
    border-radius: 4px;
    background-color: #fff;
}

.ask {
    padding-top: 17px;
}

.ask h3 {
    margin: 0 0 9px;
    line-height: 16px;
    font-size: 11px;
    font-weight: 600;
}

.question {
    width: 100%;
    display: flex;
    align-items: center;
    gap: 6px;
    padding: 5px 4px 7px 9px;
    line-height: 19px;
    border-radius: 2px;
    background-color: #f3f6ff;
    color: #7347ff;
    text-align: left;
}

.question + .question {
    margin-top: 8px;
}

.question svg {
    width: 14px;
    height: 14px;
    flex: none;
    fill: #7b61ff;
}

.chat-tools {
    height: 38px;
    display: flex;
    align-items: center;
    padding: 0 4px 0 5px;
    border-bottom: 1px solid #dfe1e8;
}

.chat-tools .icon-btn,
.composer .icon-btn {
    color: #33353c;
}

.new-chat {
    margin-left: auto;
}

.composer {
    height: 112px;
    display: flex;
    flex-direction: column;
}

.composer textarea {
    flex: 1;
    padding: 4px 24px 0 7px;
    line-height: 15px;
    border: none;
    outline: none;
    resize: none;
    background: none;
}

.composer textarea::placeholder {
    color: #9c9ea6;
}

.composer-bar {
    display: flex;
    align-items: center;
    padding: 0 4px 6px 9px;
}

.idea {
    width: 24px;
    height: 24px;
    display: flex;
    align-items: center;
    justify-content: center;
    margin-right: 4px;
    border-radius: 50%;
    background-color: #fff;
}

.idea .icon {
    color: #7347ff;
}

.send {
    margin-left: auto;
}

.send path {
    fill: #7347ff;
    stroke: #7347ff;
}

.chat-file {
    height: 32px;
    display: flex;
    align-items: center;
    gap: 3px;
    padding-left: 7px;
    border-top: 1px solid #dfe1e8;
    color: #4b4d55;
}

/* Status bar */
.statusbar {
    height: 31px;
    flex: none;
    display: flex;
    align-items: center;
    padding: 0 8px 0 11px;
    border-top: 1px solid #dfe1e8;
    background-color: #f5f6fb;
    font-size: 11px;
}

.page-nav {
    display: flex;
    align-items: center;
    margin: 0 46px 0 auto;
}

.page-box {
    width: 62px;
    height: 22px;
    display: flex;
    align-items: center;
    margin: 0 5px;
    border: 1px solid #dcdee4;
    border-radius: 6px;
    background-color: #fff;
}

.page-box input {
    width: 27px;
    border: none;
    padding: 0;
    outline: none;
    background: none;
    text-align: right;
    font-size: 12px;
}

.page-box span {
    margin-left: 3px;
    color: #9c9ea6;
}

.view-tools {
    display: flex;
    align-items: center;
}

.view-btn {
    width: 28px;
    margin-right: 12px;
    display: flex;
    align-items: center;
    color: #55575f;
}

.view-btn + .view-btn {
    margin-right: 6px;
}

.zoom-range {
    appearance: none;
    width: 104px;
    height: 12px;
    margin: 0 12px;
    background: none;
}

.zoom-range::-webkit-slider-runnable-track {
    height: 4px;
    background: linear-gradient(to right, #2f80ff 40%, #dadeea 40%);
}

.zoom-range::-webkit-slider-thumb {
    appearance: none;
    width: 12px;
    height: 12px;
    margin-top: -4px;
    border-radius: 50%;
    background-color: #2f80ff;
}

.zoom-select {
    width: 65px;
    margin: 0 6px 0 5px;
}

.zoom-select select {
    padding: 0 9px;
}
```

FILE: script.js
```js
const CM = 37.8;

// Draws one centimetre ruler; "start" is where the page edge falls on it
function drawRuler(id, start, length, vertical, marker) {
    const ruler = document.getElementById(id);
    let ticks = '';
    let labels = '';

    for (let i = -10; start + i * CM / 10 < length; i++) {
        const pos = Math.round(start + i * CM / 10) + 0.5;
        if (pos < 0) continue;
        const size = i % 10 === 0 ? 16 : i % 5 === 0 ? 8 : 3;
        ticks += vertical ? `M${16 - size} ${pos}H16` : `M${pos} ${16 - size}V16`;

        if (i >= 0 && i % 10 === 0) {
            labels += vertical
                ? `<text transform="translate(3 ${pos + 1}) rotate(90)">${i / 10}</text>`
                : `<text x="${pos + 1}" y="13">${i / 10}</text>`;
        }
    }

    ticks += vertical ? `M0 ${marker}H16` : `M${marker} 0V16`;
    ruler.innerHTML = `<path d="${ticks}"/>${labels}`;
}

function drawRulers() {
    const x = document.getElementById('ruler-x');
    const y = document.getElementById('ruler-y');
    drawRuler('ruler-x', 26, x.clientWidth, false, 164.5);
    drawRuler('ruler-y', 3, y.clientHeight, true, 94.5);
}

window.addEventListener('resize', drawRulers);
drawRulers();

const nameInput = document.getElementById('field-name');
nameInput.focus();
nameInput.select();
```
